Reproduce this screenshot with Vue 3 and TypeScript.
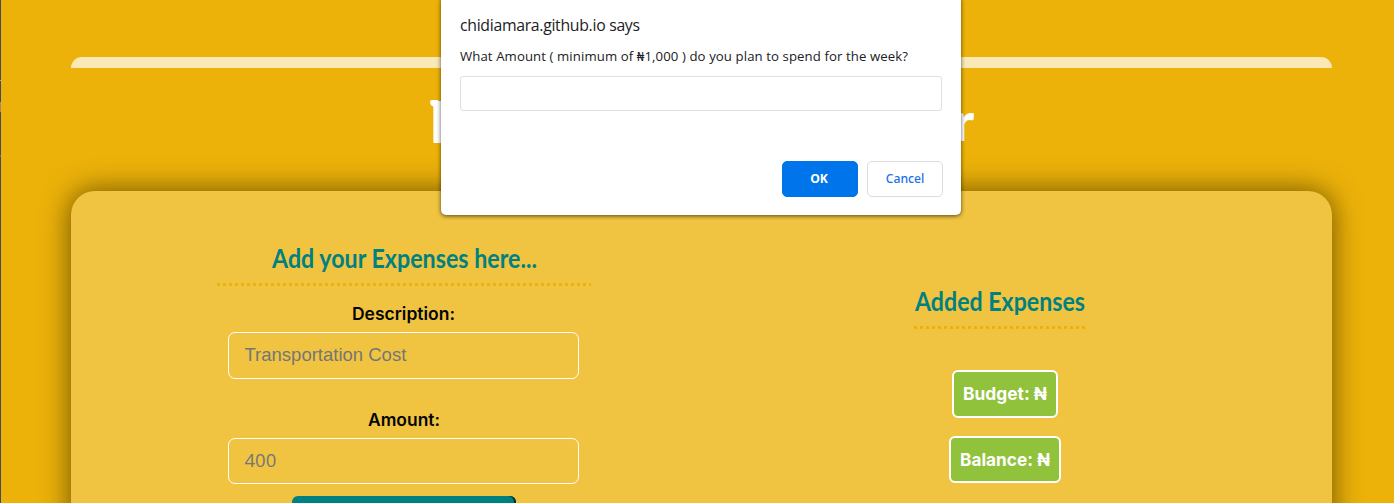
<script setup lang="ts">
interface Field {
  id: string
  label: string
  labelWidth: number
  placeholder: string
}

const fields: Field[] = [
  { id: 'description', label: 'Description:', labelWidth: 103, placeholder: 'Transportation Cost' },
  { id: 'amount', label: 'Amount:', labelWidth: 72, placeholder: '400' },
]

const totals = [
  { id: 'budget', label: 'Budget: ₦', width: 84 },
  { id: 'balance', label: 'Balance: ₦', width: 90 },
]
</script>

<template>
  <div class="page">
    <i class="edge"></i>
    <div class="bar"></div>
    <h1 class="title"><span class="first">D</span><span class="last">r</span></h1>

    <main class="card">
      <section class="form">
        <h2 class="form-heading">
          <svg width="266" height="34"><text class="display" x="1" y="23" textLength="265" lengthAdjust="spacingAndGlyphs">Add your Expenses here...</text></svg>
          <svg class="dots" width="374" height="3"><line x1="0" y1="1.5" x2="374" y2="1.5" /></svg>
        </h2>
        <div v-for="f in fields" :key="f.id" class="field">
          <label :for="f.id">
            <svg :width="f.labelWidth" height="26"><text class="label" x="0" y="19" :textLength="f.labelWidth" lengthAdjust="spacingAndGlyphs">{{ f.label }}</text></svg>
          </label>
          <input :id="f.id" :class="f.id" type="text" :placeholder="f.placeholder" />
        </div>
        <button class="submit" type="button"></button>
      </section>

      <section class="summary">
        <h2 class="summary-heading">
          <svg width="172" height="34"><text class="display" x="1" y="23" textLength="170" lengthAdjust="spacingAndGlyphs">Added Expenses</text></svg>
          <svg class="dots" width="172" height="3"><line x1="0" y1="1.5" x2="172" y2="1.5" /></svg>
        </h2>
        <div v-for="t in totals" :key="t.id" class="total" :class="t.id">
          <svg :width="t.width" height="26"><text class="total-text" x="0" y="19" :textLength="t.width" lengthAdjust="spacingAndGlyphs">{{ t.label }}</text></svg>
        </div>
      </section>
    </main>

    <div class="dialog" role="dialog">
      <svg class="origin" width="200" height="26"><text x="0" y="19" textLength="180">chidiamara.github.io says</text></svg>
      <svg class="message" width="470" height="24"><text x="0" y="17" textLength="448">What Amount ( minimum of ₦1,000 ) do you plan to spend for the week?</text></svg>
      <input class="prompt" type="text" />
      <div class="actions">
        <button class="ok" type="button">OK</button>
        <button class="cancel" type="button">Cancel</button>
      </div>
    </div>
  </div>
</template>

<style>
body {
  margin: 0;
  background: #ecb20a;
}
</style>

<style scoped>
* {
  box-sizing: border-box;
}
.page {
  position: relative;
  width: 1394px;
  height: 503px;
  overflow: hidden;
  padding: 57px 62px 0 71px;
  background: #ecb20a;
}
svg {
  display: block;
  overflow: visible;
}
.edge {
  position: absolute;
  left: 0;
  top: 0;
  width: 1px;
  height: 503px;
  background: linear-gradient(#464b55 0 80px, #aaa59b 80px 81px, #464b55 81px 102px, #a8866a 102px 112px, #464b55 112px 155px, #587568 155px 157px, #464b55 157px);
}
.bar {
  height: 11px;
  border-radius: 11px 11px 0 0;
  background: #fae8b6;
}
.title {
  display: flex;
  justify-content: space-between;
  width: 545px;
  height: 123px;
  margin: 0 0 0 358px;
  padding-top: 23px;
  color: #fff;
  font: 900 58px/60px Lato, sans-serif;
}
.first {
  position: relative;
}
.first::before {
  content: '';
  position: absolute;
  left: 1px;
  top: 9px;
  width: 8px;
  height: 7px;
  border-radius: 2px 0 0 5px;
  background: #fff;
}
.last {
  font-size: 54px;
}
.card {
  display: flex;
  height: 400px;
  border-radius: 24px;
  background: #f0c441;
  box-shadow: 0 0 28px 1px #715500;
}
.form {
  display: flex;
  flex-direction: column;
  align-items: center;
  width: 374px;
  margin-left: 146px;
  padding-top: 54px;
}
h2 {
  display: flex;
  flex-direction: column;
  align-items: center;
  margin: 0;
}
.form-heading {
  height: 55px;
}
.display {
  fill: #008080;
  font: bold 27px Lato, sans-serif;
}
.dots {
  margin-top: 3.5px;
}
.dots line {
  stroke: #ecb20a;
  stroke-width: 3px;
  stroke-dasharray: 3 3;
}
.field {
  display: flex;
  flex-direction: column;
  align-items: center;
  width: 352px;
  height: 106px;
  margin-right: 1px;
}
.field label {
  height: 32px;
  padding-top: 1px;
}
.label {
  fill: #050505;
  font: 600 17.3px Inter, sans-serif;
}
.field input {
  align-self: flex-start;
  width: 351px;
  height: 47px;
  padding: 0 16px 2px;
  border: 1px solid #fff;
  border-radius: 7px;
  outline: none;
  background: transparent;
  color: #222;
  font: 18.5px 'Liberation Sans', Arial, sans-serif;
}
.field input.amount {
  height: 46px;
  padding-bottom: 4px;
  font-family: 'Open Sans', sans-serif;
}
.field input::placeholder {
  color: #757575;
  opacity: 1;
}
.submit {
  width: 224px;
  height: 48px;
  margin-top: -16px;
  border: 0;
  border-radius: 6px;
  background: #008080;
  box-shadow: inset -2px 0 0 #062e2d;
}
.summary {
  display: flex;
  flex-direction: column;
  align-items: center;
  width: 182px;
  margin-left: 318px;
  padding-top: 97px;
}
.summary-heading {
  height: 40px;
  margin: 0 0 42px;
}
.total {
  display: flex;
  justify-content: center;
  align-items: center;
  width: 106px;
  height: 48px;
  margin-left: 10px;
  margin-bottom: 18px;
  border: 2px solid #fff;
  border-radius: 6px;
  background: #90c23b;
}
.total.balance {
  width: 112px;
  height: 47px;
}
.total-text {
  fill: #fff;
  font: bold 18px Inter, 'Noto Sans', sans-serif;
}
.dialog {
  position: absolute;
  left: 441px;
  top: -4px;
  width: 520px;
  height: 219px;
  padding: 16px 18px 0 19px;
  border-radius: 5px;
  background: #fff;
  box-shadow: 0 1px 4px rgba(0, 0, 0, 0.65);
  font-family: 'Open Sans', 'Noto Sans', sans-serif;
}
.origin text {
  fill: #202124;
  font-size: 15.8px;
}
.message {
  margin-top: 6px;
}
.message text {
  fill: #202124;
  font-size: 13.2px;
}
.prompt {
  display: block;
  width: 482px;
  height: 35px;
  margin-top: 8px;
  border: 1px solid #dfe0e2;
  border-radius: 3px;
  outline: none;
  background: #fff;
}
.actions {
  display: flex;
  justify-content: flex-end;
  gap: 9px;
  margin-top: 50px;
}
.actions button {
  width: 76px;
  height: 36px;
  padding: 0 0 2px;
  border: 1px solid #dadce0;
  border-radius: 5px;
  background: #fff;
  color: #1a73e8;
  font: 500 12.2px 'Noto Sans', sans-serif;
}
.actions .ok {
  padding-right: 2px;
  border-color: #0075eb;
  background: #0075eb;
  color: #fff;
  font-weight: 700;
}
</style>
